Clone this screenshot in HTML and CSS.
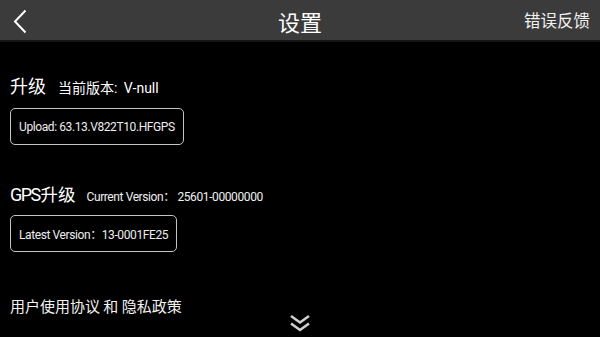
FILE: index.html
```html
<!DOCTYPE html>
<html lang="zh">
<head>
<meta charset="utf-8">
<title>设置</title>
<link rel="stylesheet" href="styles.css">
</head>
<body>
<div class="app">
  <header class="topbar">
    <div class="back">
      <svg width="14" height="25" viewBox="0 0 14 25"><polyline points="12.5,1.5 2,12.5 12.5,23.5" fill="none" stroke="#ffffff" stroke-width="2"/></svg>
    </div>
    <div class="title">设置</div>
    <div class="feedback">错误反馈</div>
  </header>
  <main class="content">
    <section class="sec sec-upgrade">
      <div class="row">
        <span class="heading">升级</span>
        <span class="sub">当前版本<span class="latin">: V-null</span></span>
      </div>
      <div class="box">Upload: 63.13.V822T10.HFGPS</div>
    </section>
    <section class="sec sec-gps">
      <div class="row">
        <span class="heading"><span class="gps">GPS</span>升级</span>
        <span class="sub small">Current Version：&nbsp;25601-00000000</span>
      </div>
      <div class="box">Latest Version：13-0001FE25</div>
    </section>
    <section class="sec sec-policy">
      <div class="policy">用户使用协议 和 隐私政策</div>
    </section>
  </main>
  <div class="more">
    <svg width="22" height="19" viewBox="0 0 22 19"><polyline points="2,2 11,8.5 20,2" fill="none" stroke="#cfcfcf" stroke-width="2.6"/><polyline points="2,9.5 11,16 20,9.5" fill="none" stroke="#cfcfcf" stroke-width="2.6"/></svg>
  </div>
</div>
</body>
</html>
```
FILE: styles.css
```css
html, body {
  margin: 0;
  padding: 0;
  background: #000;
}
body {
  font-family: Roboto, "Noto Sans CJK SC", sans-serif;
  color: #fff;
}
.app {
  position: relative;
  width: 600px;
  height: 337px;
  overflow: hidden;
  background: #000;
}
.topbar {
  height: 40px;
  background: #3b3b3b;
  border-top: 1px solid #444;
  border-bottom: 2px solid #161616;
  box-sizing: content-box;
  display: grid;
  grid-template-columns: 1fr auto 1fr;
  align-items: center;
  margin-top: -1px;
}
.back {
  padding-left: 13px;
  display: flex;
  align-items: center;
  padding-top: 2px;
}
.title {
  font-family: "Noto Sans CJK SC", sans-serif;
  font-size: 22px;
  line-height: 28px;
  color: #fff;
  padding-top: 1px;
}
.feedback {
  justify-self: end;
  padding-right: 10px;
  font-family: "Noto Sans CJK SC", sans-serif;
  font-size: 16.5px;
  line-height: 22px;
  color: #f2f2f2;
}
.content {
  padding-left: 10px;
}
.row {
  display: flex;
  align-items: baseline;
  gap: 12px;
  height: 24px;
  line-height: 24px;
}
.sec-gps .row {
  gap: 11px;
}
.heading {
  font-size: 18px;
  color: #fff;
}
.sec-gps .heading {
  font-size: 17.5px;
}
.gps {
  font-size: 18px;
  letter-spacing: -1.6px;
  margin-right: 1px;
}
.sub {
  font-size: 14px;
  color: #fff;
}
.sub .latin {
  word-spacing: 3px;
}
.sub.small {
  font-size: 12px;
  letter-spacing: -0.4px;
  color: #f0f0f0;
}
.box {
  display: inline-flex;
  align-items: center;
  height: 37px;
  box-sizing: border-box;
  padding: 0 8px;
  border: 1px solid #c4c4c4;
  border-radius: 5px;
  font-size: 12px;
  letter-spacing: -0.4px;
  color: #eee;
  margin-top: 9px;
}
.sec-upgrade {
  padding-top: 33px;
}
.sec-gps {
  padding-top: 38px;
}
.sec-gps .box {
  margin-top: 8px;
}
.sec-policy {
  padding-top: 44px;
}
.policy {
  font-family: "Noto Sans CJK SC", sans-serif;
  font-size: 15px;
  line-height: 20px;
  color: #f2f2f2;
}
.more {
  position: absolute;
  left: 289px;
  bottom: 4px;
  line-height: 0;
}
```
